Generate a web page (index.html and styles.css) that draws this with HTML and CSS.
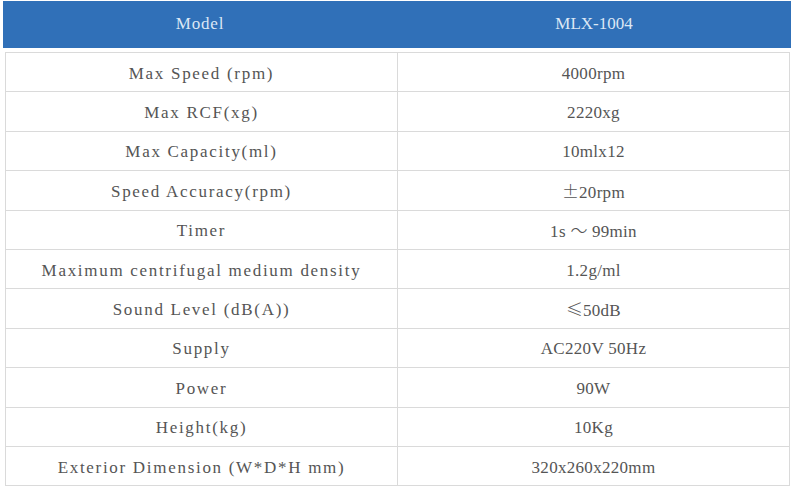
FILE: index.html
```html
<!DOCTYPE html>
<html>
<head>
<meta charset="utf-8">
<link rel="stylesheet" href="styles.css">
</head>
<body>
<div class="head">
  <div class="hcell">Model</div>
  <div class="hcell val">MLX-1004</div>
</div>
<table class="spec">
  <tr><td>Max Speed (rpm)</td><td>4000rpm</td></tr>
  <tr><td>Max RCF(xg)</td><td>2220xg</td></tr>
  <tr><td>Max Capacity(ml)</td><td>10mlx12</td></tr>
  <tr><td>Speed Accuracy(rpm)</td><td><span class="cjk">±</span>20rpm</td></tr>
  <tr><td>Timer</td><td>1s <span class="cjk">～</span> 99min</td></tr>
  <tr><td>Maximum centrifugal medium density</td><td>1.2g/ml</td></tr>
  <tr><td>Sound Level (dB(A))</td><td><span class="cjk">≤</span>50dB</td></tr>
  <tr><td>Supply</td><td>AC220V 50Hz</td></tr>
  <tr><td>Power</td><td>90W</td></tr>
  <tr><td>Height(kg)</td><td>10Kg</td></tr>
  <tr><td>Exterior Dimension (W*D*H mm)</td><td>320x260x220mm</td></tr>
</table>
</body>
</html>
```
FILE: styles.css
```css
html, body {
  margin: 0;
  padding: 0;
  background: #ffffff;
}
body {
  font-family: "Liberation Serif", "Noto Sans CJK SC", serif;
  font-size: 17px;
  letter-spacing: 1.7px;
  color: #555555;
}
.head {
  margin: 1px 2px 0 3px;
  height: 47px;
  background: #3070b8;
  display: grid;
  grid-template-columns: 1fr 1fr;
}
.hcell {
  display: flex;
  align-items: center;
  justify-content: center;
  color: #dce7f5;
  padding-bottom: 2px;
  letter-spacing: 0.8px;
}
.hcell.val {
  letter-spacing: 0;
}
.spec {
  margin: 4px 0 0 5px;
  width: 785px;
  border-collapse: collapse;
  table-layout: fixed;
}
.spec tr {
  height: 39.4px;
}
.spec td {
  padding: 3px 0 0;
  line-height: 20px;
  border: 1px solid #dadada;
  text-align: center;
  vertical-align: middle;
}
.spec td:last-child {
  letter-spacing: 0.3px;
}
.cjk {
  font-family: "Noto Sans CJK SC", sans-serif;
  font-weight: 300;
  letter-spacing: 0;
}
```
